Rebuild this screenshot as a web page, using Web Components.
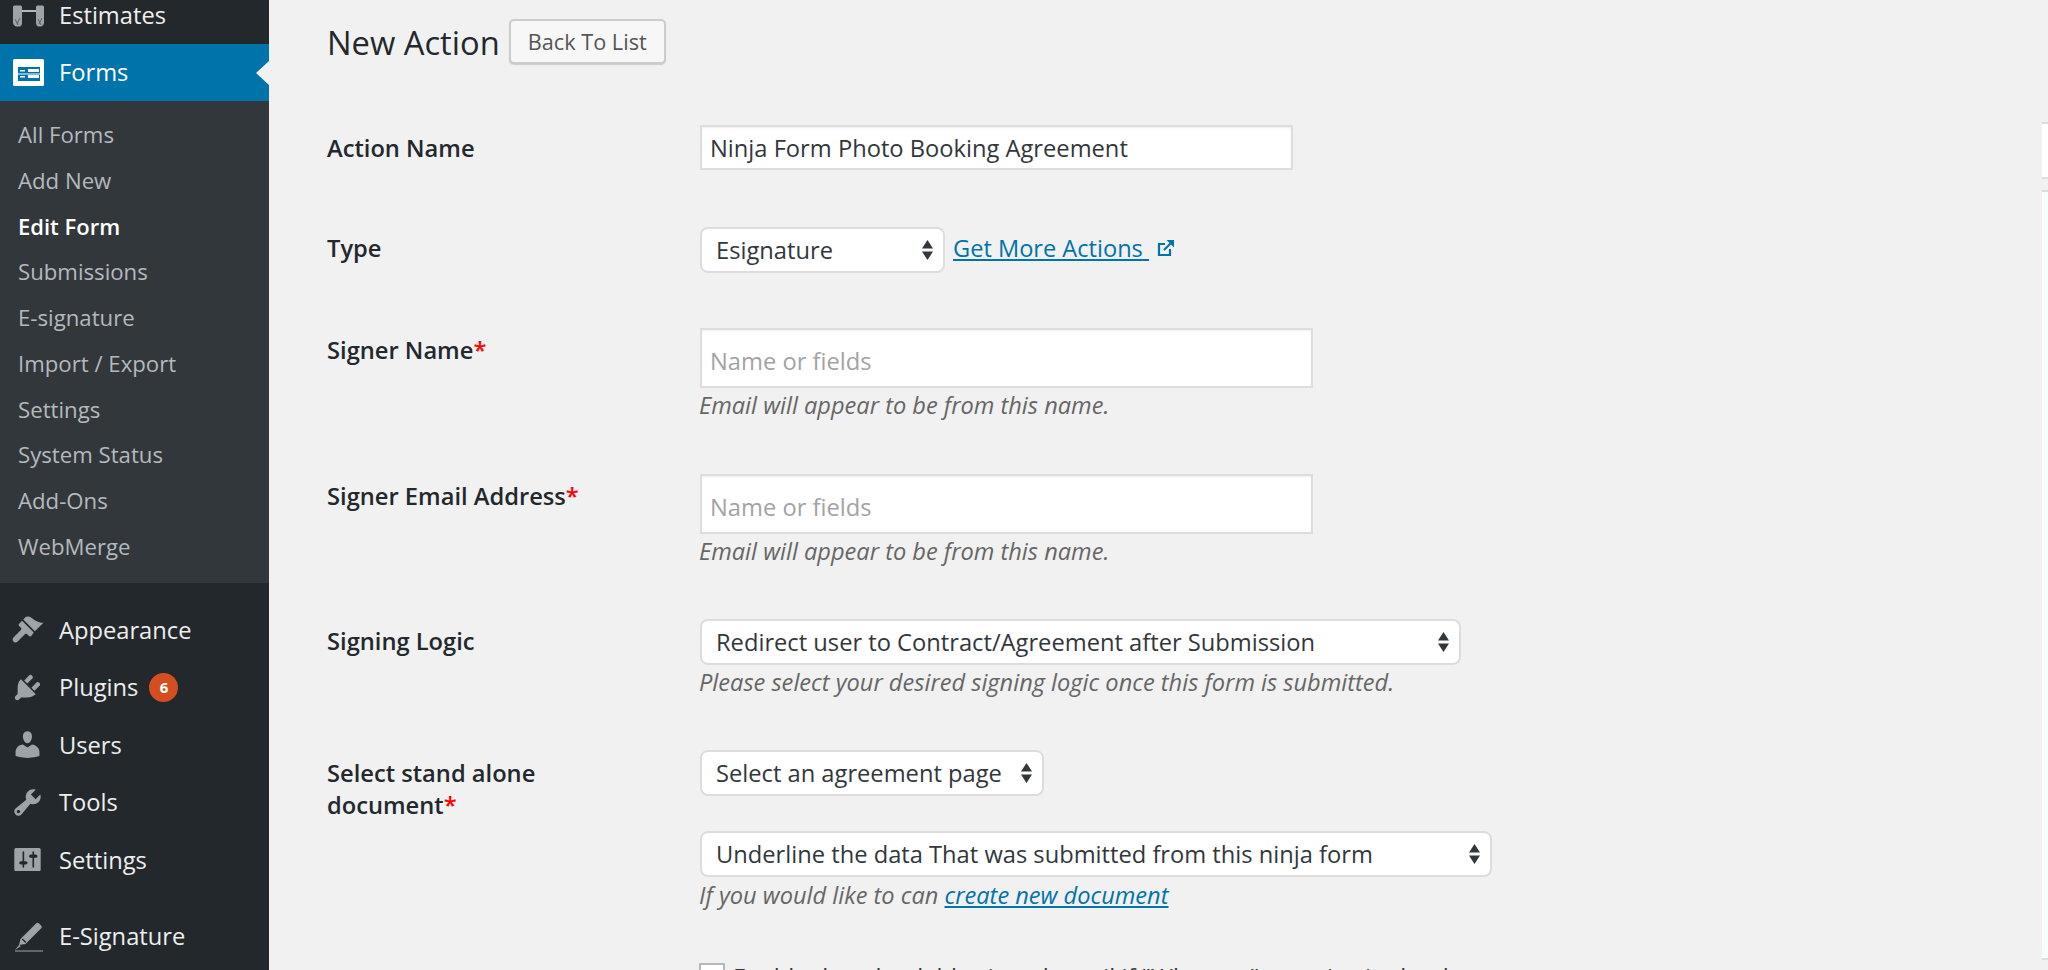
<!DOCTYPE html>
<html>
<head>
<meta charset="utf-8">
<title>New Action</title>
<style>
	html, body { margin: 0; height: 970px; overflow: hidden; background: #f1f1f1; }
	body { font-family: "Open Sans", "Noto Sans", sans-serif; color: #23282d; }
</style>
</head>
<body>
<wp-page>
	<wp-sidebar slot="sidebar">
		<wp-menu-item icon="estimates" style="margin-top:-14px">Estimates</wp-menu-item>
		<wp-menu-item icon="forms" current>Forms</wp-menu-item>
		<wp-submenu>
			<wp-sub-item>All Forms</wp-sub-item>
			<wp-sub-item>Add New</wp-sub-item>
			<wp-sub-item current>Edit Form</wp-sub-item>
			<wp-sub-item>Submissions</wp-sub-item>
			<wp-sub-item>E-signature</wp-sub-item>
			<wp-sub-item>Import / Export</wp-sub-item>
			<wp-sub-item>Settings</wp-sub-item>
			<wp-sub-item>System Status</wp-sub-item>
			<wp-sub-item>Add-Ons</wp-sub-item>
			<wp-sub-item>WebMerge</wp-sub-item>
		</wp-submenu>
		<wp-menu-item icon="appearance" style="margin-top:18px">Appearance</wp-menu-item>
		<wp-menu-item icon="plugins" badge="6">Plugins</wp-menu-item>
		<wp-menu-item icon="users">Users</wp-menu-item>
		<wp-menu-item icon="tools">Tools</wp-menu-item>
		<wp-menu-item icon="settings">Settings</wp-menu-item>
		<wp-menu-item icon="signature" style="margin-top:19px">E-Signature</wp-menu-item>
	</wp-sidebar>

	<action-header heading="New Action">Back To List</action-header>

	<form-row label="Action Name" style="margin-top:61px;--label-top:7px">
		<text-field value="Ninja Form Photo Booking Agreement" style="width:593px;height:45px"></text-field>
	</form-row>

	<form-row label="Type" style="margin-top:57px;--label-top:5px">
		<div style="display:flex;align-items:center;gap:8px">
			<select-field style="width:245px">Esignature</select-field>
			<more-link>Get More Actions</more-link>
		</div>
	</form-row>

	<form-row label="Signer Name" required style="margin-top:55px">
		<text-field placeholder="Name or fields" style="width:613px;height:60px"></text-field>
		<field-note>Email will appear to be from this name.</field-note>
	</form-row>

	<form-row label="Signer Email Address" required style="margin-top:53px">
		<text-field placeholder="Name or fields" style="width:613px;height:60px"></text-field>
		<field-note>Email will appear to be from this name.</field-note>
	</form-row>

	<form-row label="Signing Logic" style="margin-top:52px">
		<select-field style="width:761px">Redirect user to Contract/Agreement after Submission</select-field>
		<field-note>Please select your desired signing logic once this form is submitted.</field-note>
	</form-row>

	<form-row label="Select stand alone document" required style="margin-top:52px;--label-top:7px">
		<select-field style="width:344px;margin-bottom:35px">Select an agreement page</select-field>
		<select-field style="width:792px">Underline the data That was submitted from this ninja form</select-field>
		<field-note style="margin-top:2px">If you would like to can <a href="#" style="color:#0073aa">create new document</a></field-note>
	</form-row>

	<form-row style="margin-top:52px">
		<check-field>Enable downloadable signed email if "Whoever" contains in the document</check-field>
	</form-row>

	<side-panels></side-panels>
</wp-page>

<script>
const ICONS = {
	estimates: `<svg viewBox="0 0 33 33" width="33" height="33"><path fill="#9ea3a8" d="M2 9c0-1 1-1.500 2-1.500h5c1 0 2 .5 2 1.500v16c0 1.500-1 3-2 3.500H5c-1-.5-3-2-3-3.500zM25 9c0-1 1-1.500 2-1.500h4c1 0 2 .5 2 1.500v16c0 1.500-1.500 3-3 3.500h-3c-1-.5-2-2-2-3.500z"/><path fill="none" stroke="#5c6166" stroke-width="1" d="M4 21l3 6M9 20l-3 6M27 21l3 6M31 20l-3 6"/><rect x="11" y="12" width="14" height="2" fill="#b4b9be"/></svg>`,
	forms: `<svg viewBox="0 0 33 33" width="33" height="33"><rect x="2" y="3" width="31" height="27" rx="1.500" fill="#fff"/><path fill="#0073aa" d="M7 11h22v14H7z"/><path fill="#fff" d="M9 14h5v1.500H9zM17 13h11v3H17zM9 20h5v1.500H9zM17 19h11v3H17zM7 17.500h22v1H7z"/></svg>`,
	appearance: `<svg viewBox="0 0 20 20" width="33" height="33"><path fill="#9ea3a8" d="M14.480 11.060L7.410 3.990l1.500-1.500c.5-.56 2.300-.47 3.510.32 1.210.8 1.430 1.280 2.910 2.100 1.180.64 2.450 1.260 4.450.85zM13.770 11.770L6.700 4.700 4.930 6.470c-.39.39-.39 1.020 0 1.410l1.060 1.060c.39.39.39 1.030 0 1.420L1.500 14.800c-.7.7-.7 1.800 0 2.500s1.800.7 2.500 0l4.400-4.400c.39-.39 1.030-.39 1.420 0l1.060 1.060c.39.39 1.020.39 1.410 0z"/></svg>`,
	plugins: `<svg viewBox="0 0 20 20" width="33" height="33"><path fill="#9ea3a8" d="M13.110 4.360L9.870 7.600 8 5.730l3.240-3.240c.35-.34 1.050-.2 1.560.32.52.51.66 1.210.31 1.550zm-8 1.770l.91-1.120 9.010 9.010-1.190.84c-.71.71-2.630 1.160-3.820 1.160H6.140L4.900 17.260c-.59.59-1.540.59-2.120 0-.59-.58-.59-1.530 0-2.120l1.240-1.240v-3.880c0-1.130.4-3.190 1.090-3.890zm7.260 3.970l3.240-3.240c.34-.35 1.040-.21 1.550.31.52.51.66 1.210.31 1.550l-3.240 3.250z"/></svg>`,
	users: `<svg viewBox="0 0 20 20" width="33" height="33"><path fill="#9ea3a8" d="M10 9.250c-2.270 0-2.730-3.440-2.730-3.440C7 4.020 7.820 2 9.970 2c2.160 0 2.980 2.020 2.710 3.810 0 0-.41 3.440-2.680 3.440zm0 2.570L12.720 10c2.390 0 4.520 2.330 4.520 4.530v2.490s-3.650 1.130-7.240 1.130c-3.650 0-7.240-1.130-7.240-1.130v-2.490c0-2.250 1.940-4.480 4.470-4.480z"/></svg>`,
	tools: `<svg viewBox="0 0 20 20" width="33" height="33"><path fill="#9ea3a8" fill-rule="evenodd" d="M16.680 9.770c-1.340 1.340-3.300 1.670-4.950.99l-5.410 6.520c-.99.99-2.590.99-3.580 0s-.99-2.590 0-3.570l6.520-5.420c-.68-1.650-.35-3.610.99-4.950 1.280-1.280 3.120-1.620 4.720-1.060l-2.890 2.890 2.820 2.820 2.860-2.870c.53 1.580.18 3.390-1.080 4.650zM3.810 16.210c.4.39 1.040.39 1.430 0 .4-.4.4-1.040 0-1.430-.39-.4-1.030-.4-1.430 0-.39.39-.39 1.030 0 1.430z"/></svg>`,
	settings: `<svg viewBox="0 0 20 20" width="33" height="33"><path fill="#9ea3a8" d="M18 16V4c0-.55-.45-1-1-1H3c-.55 0-1 .45-1 1v12c0 .55.45 1 1 1h14c.55 0 1-.45 1-1zM8 11h1c.55 0 1 .45 1 1s-.45 1-1 1H8v1.500c0 .28-.22.5-.5.5s-.5-.22-.5-.5V13H6c-.55 0-1-.45-1-1s.45-1 1-1h1V5.500c0-.28.22-.5.5-.5s.5.22.5.5V11zm5-2h-1c-.55 0-1-.45-1-1s.45-1 1-1h1V5.500c0-.28.22-.5.5-.5s.5.22.5.5V7h1c.55 0 1 .45 1 1s-.45 1-1 1h-1v5.500c0 .28-.22.5-.5.5s-.5-.22-.5-.5V9z"/></svg>`,
	signature: `<svg viewBox="0 0 33 33" width="33" height="33"><path fill="#9ea3a8" d="M8 25l1.500-6L25 3.500c1-1 2-1 3 0l2 2c1 1 1 2 0 3L14.500 24zM10.800 19.500l3.500 3.500 1-1-3.500-3.500z"/><path fill="#9ea3a8" d="M4 30.500h28v1H4zM4 30l4-5 2 1z"/></svg>`
};

class WpPage extends HTMLElement {
	constructor() {
		super();
		this.attachShadow({ mode: 'open' });
		this.shadowRoot.innerHTML = `
			<style>
				:host { display: grid; grid-template-columns: 269px 1fr; height: 970px; overflow: hidden; position: relative; }
				main { padding: 19px 0 0 58px; min-width: 0; }
			</style>
			<slot name="sidebar"></slot>
			<main><slot></slot></main>
		`;
	}
}

class WpSidebar extends HTMLElement {
	constructor() {
		super();
		this.attachShadow({ mode: 'open' });
		this.shadowRoot.innerHTML = `
			<style>
				:host { display: block; background: #23282d; height: 970px; overflow: hidden; }
			</style>
			<slot></slot>
		`;
	}
}

class WpMenuItem extends HTMLElement {
	constructor() {
		super();
		this.attachShadow({ mode: 'open' });
		const badge = this.getAttribute('badge');
		this.shadowRoot.innerHTML = `
			<style>
				:host { display: flex; align-items: center; height: 57.5px; color: #eee; font-size: 23.7px; position: relative; padding-left: 11px; }
				:host([current]) { background: #0073aa; color: #fff; }
				.icon { width: 33px; height: 33px; margin-right: 15px; flex: none; }
				svg { display: block; }
				.badge { width: 29px; height: 29px; border-radius: 50%; background: #d54e21; color: #fff; font-size: 15px; font-weight: 700; display: flex; align-items: center; justify-content: center; margin-left: 11px; }
				.arrow { position: absolute; right: 0; top: 17px; width: 0; height: 0; border: 12px solid transparent; border-right-color: #f1f1f1; border-left-width: 0; border-right-width: 13px; }
			</style>
			<span class="icon">${ICONS[this.getAttribute('icon')] || ''}</span>
			<slot></slot>
			${badge ? `<span class="badge">${badge}</span>` : ''}
			${this.hasAttribute('current') ? '<span class="arrow"></span>' : ''}
		`;
	}
}

class WpSubmenu extends HTMLElement {
	constructor() {
		super();
		this.attachShadow({ mode: 'open' });
		this.shadowRoot.innerHTML = `
			<style>
				:host { display: block; background: #32373c; padding: 11px 0 13.5px; }
			</style>
			<slot></slot>
		`;
	}
}

class WpSubItem extends HTMLElement {
	constructor() {
		super();
		this.attachShadow({ mode: 'open' });
		this.shadowRoot.innerHTML = `
			<style>
				:host { display: block; height: 45.75px; line-height: 45.75px; padding-left: 18px; font-size: 22.2px; color: #b4b9be; }
				:host([current]) { color: #fff; font-weight: 600; font-size: 22px; }
			</style>
			<slot></slot>
		`;
	}
}

class ActionHeader extends HTMLElement {
	constructor() {
		super();
		this.attachShadow({ mode: 'open' });
		this.shadowRoot.innerHTML = `
			<style>
				:host { display: flex; align-items: center; height: 45px; }
				h1 { margin: 0 9px 0 0; font-size: 32.7px; font-weight: 400; color: #23282d; line-height: 48px; position: relative; top: 1px; }
				.button { box-sizing: border-box; height: 45px; width: 157px; display: flex; align-items: center; justify-content: center; background: #f7f7f7; border: 2px solid #ccc; border-radius: 5px; box-shadow: 0 1px 1px #ccc; color: #555; font-size: 21.7px; }
			</style>
			<h1>${this.getAttribute('heading')}</h1>
			<div class="button"><slot></slot></div>
		`;
	}
}

class FormRow extends HTMLElement {
	constructor() {
		super();
		this.attachShadow({ mode: 'open' });
		const label = this.getAttribute('label') || '';
		const star = this.hasAttribute('required') ? '<span class="req">*</span>' : '';
		this.shadowRoot.innerHTML = `
			<style>
				:host { display: grid; grid-template-columns: 373px 1fr; }
				.label { font-size: 23.7px; font-weight: 600; line-height: 32px; padding: var(--label-top, 6px) 40px 0 0; color: #23282d; }
				.req { color: #f00; }
			</style>
			<div class="label">${label}${star}</div>
			<div class="control"><slot></slot></div>
		`;
	}
}

class TextField extends HTMLElement {
	constructor() {
		super();
		this.attachShadow({ mode: 'open' });
		const value = this.getAttribute('value');
		const text = value || this.getAttribute('placeholder') || '';
		this.shadowRoot.innerHTML = `
			<style>
				:host { display: flex; align-items: center; box-sizing: border-box; background: #fff; border: 2px solid #ddd; padding-left: 8px; font-size: 23.7px; box-shadow: inset 0 1px 2px rgba(0,0,0,.07); }
				span { color: ${value ? '#32373c' : '#a3a3a3'}; position: relative; top: ${value ? '0' : '3px'}; }
			</style>
			<span>${text}</span>
		`;
	}
}

class SelectField extends HTMLElement {
	constructor() {
		super();
		this.attachShadow({ mode: 'open' });
		this.shadowRoot.innerHTML = `
			<style>
				:host { display: flex; align-items: center; justify-content: space-between; box-sizing: border-box; height: 46px; background: #fff; border: 2px solid #ddd; border-radius: 8px; padding: 0 10px 0 14px; font-size: 23.7px; color: #32373c; }
				svg { display: block; flex: none; }
			</style>
			<span><slot></slot></span>
			<svg width="11" height="20" viewBox="0 0 11 20"><path fill="#32373c" d="M5.5 0L11 8.5H0zM5.500 20L0 11.5h11z"/></svg>
		`;
	}
}

class MoreLink extends HTMLElement {
	constructor() {
		super();
		this.attachShadow({ mode: 'open' });
		this.shadowRoot.innerHTML = `
			<style>
				:host { display: flex; align-items: center; font-size: 23.6px; color: #0073aa; position: relative; top: -2px; }
				a { color: inherit; white-space: pre; }
				svg { display: block; margin-left: 8px; }
			</style>
			<a href="#"><slot></slot> </a>
			<svg width="18" height="18" viewBox="0 0 18 18"><path fill="none" stroke="#0073aa" stroke-width="2.2" d="M13 10v6H2V5h6"/><path fill="none" stroke="#0073aa" stroke-width="2.2" d="M7 11L16 2"/><path fill="#0073aa" d="M9.5 1H17v7.5z"/></svg>
		`;
	}
}

class FieldNote extends HTMLElement {
	constructor() {
		super();
		this.attachShadow({ mode: 'open' });
		this.shadowRoot.innerHTML = `
			<style>
				:host { display: block; font-style: italic; font-size: 23.6px; line-height: 32px; color: #666; margin: 1px 0 0 -1px; }
			</style>
			<slot></slot>
		`;
	}
}

class CheckField extends HTMLElement {
	constructor() {
		super();
		this.attachShadow({ mode: 'open' });
		this.shadowRoot.innerHTML = `
			<style>
				:host { display: flex; gap: 8px; font-size: 23.7px; line-height: 32px; color: #32373c; margin-left: -1px; white-space: nowrap; }
				.box { box-sizing: border-box; width: 26px; height: 26px; background: #fff; border: 2px solid #b4b9be; flex: none; }
				span { position: relative; top: -2px; }
			</style>
			<div class="box"></div>
			<span><slot></slot></span>
		`;
	}
}

// slivers of the next panels, cut off by the right edge of the window
class SidePanels extends HTMLElement {
	constructor() {
		super();
		this.attachShadow({ mode: 'open' });
		this.shadowRoot.innerHTML = `
			<style>
				div { position: absolute; right: 0; width: 6px; box-sizing: border-box; border-top: 2px solid #ddd; border-bottom: 2px solid #ddd; }
				.one { top: 122px; height: 57px; background: #fff; }
				.two { top: 190px; height: 770px; background: #f7fcfe; }
			</style>
			<div class="one"></div>
			<div class="two"></div>
		`;
	}
}

customElements.define('wp-page', WpPage);
customElements.define('wp-sidebar', WpSidebar);
customElements.define('wp-menu-item', WpMenuItem);
customElements.define('wp-submenu', WpSubmenu);
customElements.define('wp-sub-item', WpSubItem);
customElements.define('action-header', ActionHeader);
customElements.define('form-row', FormRow);
customElements.define('text-field', TextField);
customElements.define('select-field', SelectField);
customElements.define('more-link', MoreLink);
customElements.define('field-note', FieldNote);
customElements.define('check-field', CheckField);
customElements.define('side-panels', SidePanels);
</script>
</body>
</html>
